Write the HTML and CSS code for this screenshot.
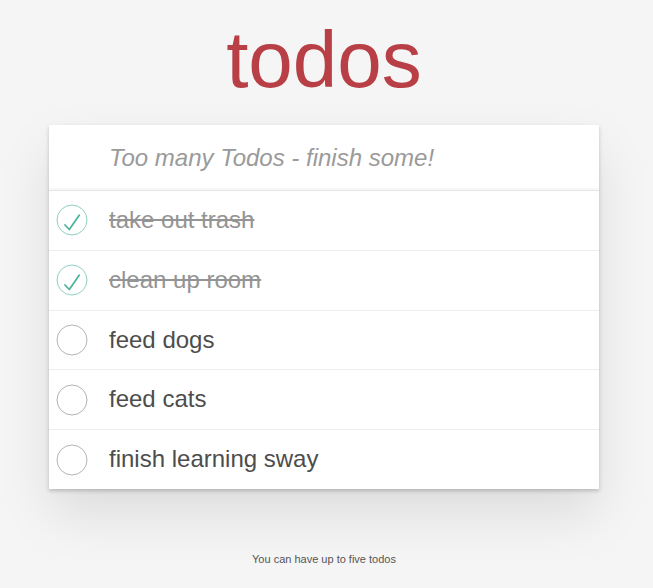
FILE: index.html
```html
<!DOCTYPE html>
<html lang="en">
<head>
<meta charset="utf-8">
<title>todos</title>
<link rel="stylesheet" href="styles.css">
</head>
<body>
<div class="page">
  <h1 class="title">todos</h1>
  <section class="todoapp">
    <header class="new-row">
      <input class="new-todo" type="text" placeholder="Too many Todos - finish some!">
    </header>
    <ul class="todo-list">
      <li class="todo done">
        <svg class="toggle" width="32" height="32" viewBox="0 0 32 32"><circle cx="16" cy="16" r="15" fill="none" stroke="#8fcfc2" stroke-width="1"/><path d="M9 21 L13.3 25.5 L23.2 11.3" fill="none" stroke="#4fb39e" stroke-width="1.8" stroke-linecap="round" stroke-linejoin="round"/></svg>
        <span class="label">take out trash</span>
      </li>
      <li class="todo done">
        <svg class="toggle" width="32" height="32" viewBox="0 0 32 32"><circle cx="16" cy="16" r="15" fill="none" stroke="#8fcfc2" stroke-width="1"/><path d="M9 21 L13.3 25.5 L23.2 11.3" fill="none" stroke="#4fb39e" stroke-width="1.8" stroke-linecap="round" stroke-linejoin="round"/></svg>
        <span class="label">clean up room</span>
      </li>
      <li class="todo">
        <svg class="toggle" width="32" height="32" viewBox="0 0 32 32"><circle cx="16" cy="16" r="15" fill="none" stroke="#b3b3b3" stroke-width="1"/></svg>
        <span class="label">feed dogs</span>
      </li>
      <li class="todo">
        <svg class="toggle" width="32" height="32" viewBox="0 0 32 32"><circle cx="16" cy="16" r="15" fill="none" stroke="#b3b3b3" stroke-width="1"/></svg>
        <span class="label">feed cats</span>
      </li>
      <li class="todo">
        <svg class="toggle" width="32" height="32" viewBox="0 0 32 32"><circle cx="16" cy="16" r="15" fill="none" stroke="#b3b3b3" stroke-width="1"/></svg>
        <span class="label">finish learning sway</span>
      </li>
    </ul>
  </section>
  <p class="info">You can have up to five todos</p>
</div>
</body>
</html>
```
FILE: styles.css
```css
html, body {
  margin: 0;
  padding: 0;
}
body {
  background: #f5f5f5;
  font-family: "Liberation Sans", Arial, sans-serif;
  color: #4d4d4d;
}
.page {
  width: 648px;
  display: flex;
  flex-direction: column;
  align-items: center;
}
.title {
  margin: 14px 0 19px;
  font-size: 80px;
  font-weight: normal;
  line-height: normal;
  color: #b83f45;
  text-align: center;
}
.todoapp {
  width: 550px;
  background: #fff;
  box-shadow: 0 2px 4px rgba(0,0,0,0.2), 0 25px 50px rgba(0,0,0,0.1);
}
.new-row {
  display: flex;
}
.new-todo {
  width: 100%;
  height: 65px;
  box-sizing: border-box;
  margin: 0;
  padding: 16px 16px 16px 60px;
  border: none;
  outline: none;
  background: transparent;
  font-family: inherit;
  font-size: 24px;
  color: #4d4d4d;
  box-shadow: inset 0 -2px 1px rgba(0,0,0,0.03);
}
.new-todo::placeholder {
  font-style: italic;
  color: #9a9a9a;
}
.todo-list {
  list-style: none;
  margin: 0;
  padding: 0;
  border-top: 1px solid #e6e6e6;
}
.todo {
  display: flex;
  align-items: center;
  height: 58.8px;
  padding-left: 7px;
  border-bottom: 1px solid #ededed;
  font-size: 24px;
}
.todo:last-child {
  border-bottom: none;
}
.toggle {
  flex: none;
  margin-right: 21px;
}
.label {
  line-height: 1.2;
  color: #4d4d4d;
}
.done .label {
  color: #949494;
  text-decoration: line-through;
}
.info {
  margin: 64px 0 0;
  font-size: 11px;
  color: #555;
  text-align: center;
}
```
